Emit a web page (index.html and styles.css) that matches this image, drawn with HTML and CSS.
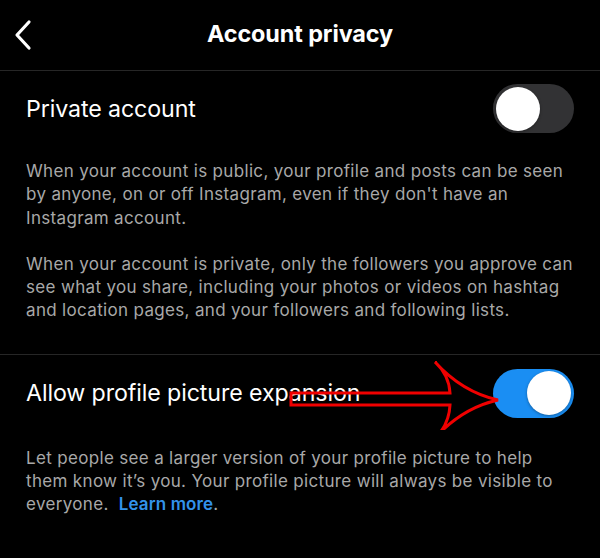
FILE: index.html
```html
<!DOCTYPE html>
<html lang="en">
<head>
<meta charset="utf-8">
<title>Account privacy</title>
<link rel="stylesheet" href="styles.css">
</head>
<body>
<div class="screen">
  <header class="topbar">
    <svg class="back" width="20" height="32" viewBox="0 0 20 32" aria-hidden="true">
      <path d="M15 3 L3 16 L15 29" fill="none" stroke="#fff" stroke-width="3.2" stroke-linecap="round" stroke-linejoin="round"/>
    </svg>
    <h1 class="title">Account privacy</h1>
  </header>

  <section class="section first">
    <div class="row">
      <span class="label">Private account</span>
      <span class="toggle off"><span class="knob"></span></span>
    </div>
    <p class="desc">When your account is public, your profile and posts can be seen<br>by anyone, on or off Instagram, even if they don't have an<br>Instagram account.</p>
    <p class="desc">When your account is private, only the followers you approve can<br>see what you share, including your photos or videos on hashtag<br>and location pages, and your followers and following lists.</p>
  </section>

  <section class="section second">
    <div class="row">
      <span class="label">Allow profile picture expansion</span>
      <span class="toggle on"><span class="knob"></span></span>
    </div>
    <p class="desc">Let people see a larger version of your profile picture to help<br>them know it’s you. Your profile picture will always be visible to<br>everyone.&nbsp; <a class="link" href="#">Learn more</a>.</p>
    <svg class="arrow" width="600" height="100" viewBox="0 330 600 100" aria-hidden="true">
      <path d="M291 393 L450 393 Q449 375 435 362 Q462 392 498 400 Q462 408 435 438 Q449 425 450 405 L291 405 Z" fill="none" stroke="#f00000" stroke-width="3" stroke-linejoin="miter"/>
    </svg>
  </section>
</div>
</body>
</html>
```

FILE: styles.css
```css
html, body {
  margin: 0;
  padding: 0;
  background: #000;
}

.screen {
  position: relative;
  width: 600px;
  height: 558px;
  background: #000;
  color: #fff;
  font-family: "Inter", "Liberation Sans", sans-serif;
  overflow: hidden;
}

.topbar {
  position: relative;
  height: 70px;
  border-bottom: 1px solid #262626;
  display: flex;
  align-items: center;
  justify-content: center;
}

.back {
  position: absolute;
  left: 14px;
  top: 19px;
}

.title {
  margin: 0;
  font-size: 23.4px;
  font-weight: 700;
  letter-spacing: -0.1px;
  line-height: 1;
  padding-bottom: 2px;
}

.section {
  padding: 0 26px;
}

.section.first {
  padding-top: 13px;
  padding-bottom: 31px;
  border-bottom: 1px solid #262626;
}

.section.second {
  padding-top: 14px;
}

.row {
  display: flex;
  align-items: center;
  justify-content: space-between;
  height: 49px;
}

.section.first .row {
  margin-bottom: 27px;
}

.section.second .row {
  margin-bottom: 29px;
}

.label {
  font-size: 23.2px;
  font-weight: 400;
  letter-spacing: -0.1px;
}

.toggle {
  position: relative;
  display: flex;
  align-items: center;
  width: 81px;
  height: 49px;
  border-radius: 25px;
  box-sizing: border-box;
  padding: 0 3px;
}

.toggle.off {
  background: #323234;
  justify-content: flex-start;
}

.toggle.on {
  background: #1a8ef3;
  justify-content: flex-end;
}

.knob {
  width: 44px;
  height: 44px;
  border-radius: 50%;
  background: #fff;
  box-shadow: 0 1px 3px rgba(0, 0, 0, 0.35);
}

.desc {
  margin: 0 -12px 0 0;
  font-size: 17px;
  line-height: 23.3px;
  letter-spacing: 0.33px;
  color: #a8a8a8;
  white-space: nowrap;
}

.desc + .desc {
  margin-top: 23px;
}

.link {
  color: #3392ea;
  font-weight: 600;
  letter-spacing: 0.1px;
  text-decoration: none;
}

.arrow {
  position: absolute;
  left: 0;
  top: 330px;
  pointer-events: none;
}
```
